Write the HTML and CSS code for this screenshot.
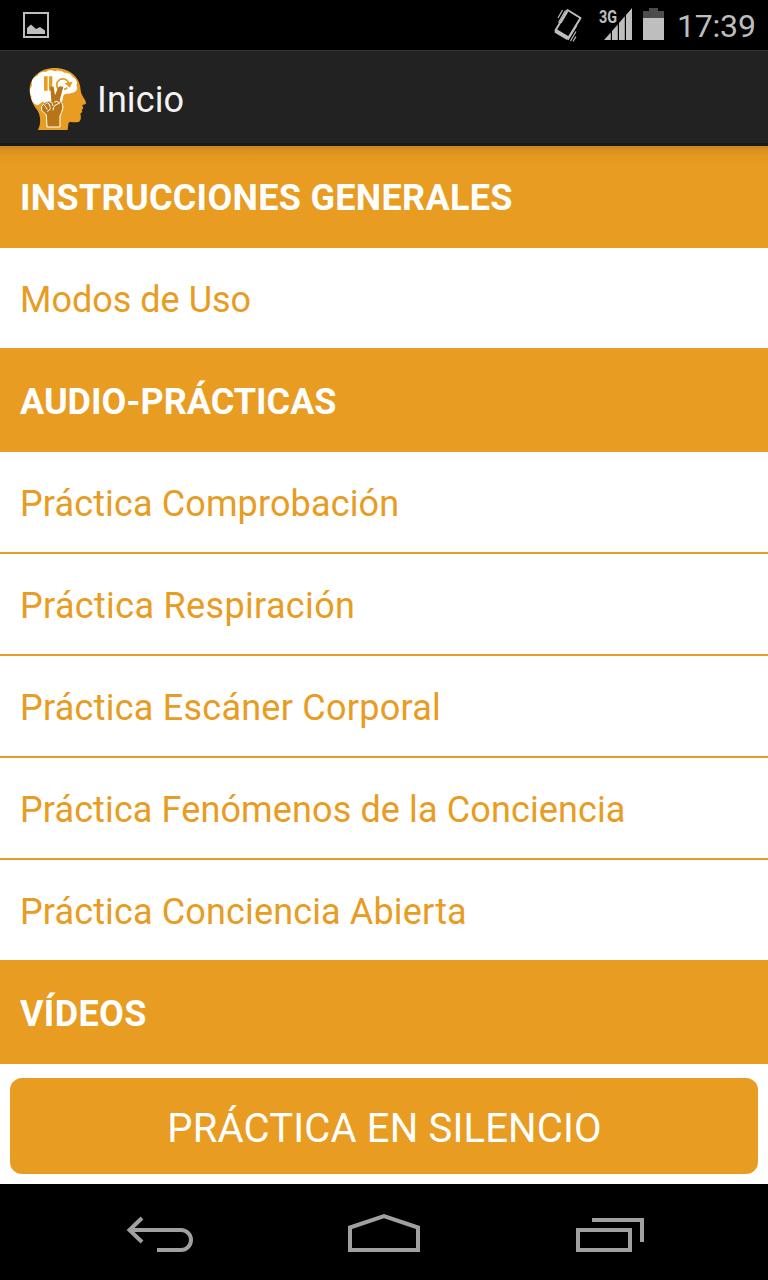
FILE: index.html
```html
<!DOCTYPE html>
<html lang="es">
<head>
<meta charset="utf-8">
<title>Inicio</title>
<link rel="stylesheet" href="styles.css">
</head>
<body>
<div class="screen">
  <div class="status">
    <svg class="status-picture" width="26" height="26" viewBox="0 0 26 26"><path d="M1 1H25V25H1Z" fill="none" stroke="#bebebe" stroke-width="2"/><path d="M4 22V16L8 12.500L13 17L17 15L22 18.500V22Z" fill="#bebebe"/></svg>
    <div class="status-right">
      <svg class="vibrate" width="30" height="36" viewBox="0 0 30 36"><path d="M14.500 3L27.500 11L15 31.500L2.500 23.500Z" fill="none" stroke="#bebebe" stroke-width="2" stroke-linejoin="round"/><path d="M2.500 21.500L16 29.500L14 33L1.500 25.500Z" fill="#bebebe"/><path d="M5 11L9.500 3M5.500 15.500L12.500 3.500M8 16L14.500 5M15 33L23.500 19M17.500 34L23 24.500M20 34.500L23 29.500" stroke="#bebebe" stroke-width="1.200"/></svg>
      <div class="signal"><span class="network">3G</span><svg width="28" height="32" viewBox="0 0 28 32"><path d="M0 32L6.800 24.500V32ZM8 23L13.800 16.500V32H8ZM15 15L20.800 8.300V32H15ZM22 7L28 0V32H22Z" fill="#bebebe"/></svg></div>
      <svg class="battery" width="21" height="32" viewBox="0 0 21 32"><path d="M0 3H6V0H15V3H21V10H0Z" fill="#4c4c4c"/><path d="M0 10H21V32H0Z" fill="#bebebe"/></svg>
      <span class="clock">17:39</span>
    </div>
  </div>
  <header class="appbar">
    <svg class="logo" width="75" height="75" viewBox="0 0 225 225">
      <path d="M54 210C65 187 61 165 51 149C40 137 29 113 29 91C29 51 61 24 104 24C151 24 181 53 182 91C183 107 198 120 198 129C198 134 189 133 187 136L190 145L185 150L187 155L181 161C185 174 182 185 172 187C158 188 145 182 145 193L143 210Z" fill="#e89c22"/>
      <path d="M54 136C40 133 33 121 34 109C27 97 29 83 36 77C32 61 42 49 52 48C56 37 70 33 77 36C86 28 99 31 104 34C113 28 128 33 133 38C145 37 155 44 158 51C168 56 174 67 169 75C176 88 166 100 156 98C146 103 140 98 132 104C127 112 130 121 124 126L94 139L67 125Z" fill="#fff"/>
      <path d="M72 49H83V92H72ZM87 49H97V92H87Z" fill="#e89c22"/>
      <path d="M119 90A18 18 0 1 1 146 72M132 88Q138 87 142 83" fill="none" stroke="#e89c22" stroke-width="5"/>
      <path d="M134 70L158 65L149 83Z" fill="#e89c22"/>
      <path d="M82 200L80 165L66 151L65 138L73 132L78 126L94 123L91 80H101L105 106L114 83Q119 75 130 81L119 121Q129 128 128 144Q124 157 119 168V200Z" fill="#b87517"/>
      <path d="M120 123Q130 130 129 144Q125 157 120 168V201H81L79 165L65 151Q62 137 70 133L75 137L82 149M77 132Q82 124 87 132L91 143M88 126Q95 123 97 131L99 138M82 155L93 145M102 127Q111 120 119 129L105 136Q99 143 99 151" fill="none" stroke="#fff" stroke-width="3"/>
    </svg>
    <h1 class="title">Inicio</h1>
  </header>
  <main class="list">
    <h2 class="section first"><span class="t1">INSTRUCCIONES GENERALES</span></h2>
    <div class="row"><span class="t2">Modos de Uso</span></div>
    <h2 class="section"><span class="t3">AUDIO-PRÁCTICAS</span></h2>
    <div class="row"><span class="t4">Práctica Comprobación</span></div>
    <div class="row"><span class="t5">Práctica Respiración</span></div>
    <div class="row"><span class="t6">Práctica Escáner Corporal</span></div>
    <div class="row"><span class="t7">Práctica Fenómenos de la Conciencia</span></div>
    <div class="row"><span class="t8">Práctica Conciencia Abierta</span></div>
    <h2 class="section"><span class="t9">VÍDEOS</span></h2>
  </main>
  <div class="action"><button class="silence">PRÁCTICA EN SILENCIO</button></div>
  <nav class="navbar">
    <svg width="70" height="40" viewBox="0 0 70 40"><path d="M4.500 14H56A10 10 0 0 1 56 34H32M17 2L4.500 14L17 26" fill="none" stroke="#a0a0a0" stroke-width="4"/></svg>
    <svg width="72" height="40" viewBox="0 0 72 40"><path d="M2 36V13.500L36 2.200L70 13.500V36Z" fill="none" stroke="#a0a0a0" stroke-width="4"/></svg>
    <svg width="68" height="40" viewBox="0 0 68 40"><path d="M2 14H54V34H2ZM16 4H66V26" fill="none" stroke="#a0a0a0" stroke-width="4"/></svg>
  </nav>
</div>
</body>
</html>
```
FILE: styles.css
```css
* { box-sizing: border-box; }
body { margin: 0; background: #000; font-family: Roboto, "Noto Sans", sans-serif; }
h1, h2 { margin: 0; }
svg { display: block; flex: none; }
.screen { width: 768px; height: 1280px; display: flex; flex-direction: column; background: #fff; overflow: hidden; }
.status { height: 50px; background: #000; display: flex; justify-content: space-between; padding: 0 12px 0 23px; color: #bebebe; }
.status-picture { margin-top: 12px; }
.status-right { display: flex; }
.vibrate { margin: 7px 16px 0 0; }
.signal { display: flex; margin-top: 8px; margin-right: 11px; }
.network { font-size: 18px; line-height: 18px; font-weight: 700; width: 18px; margin-right: -13px; transform: scaleX(.8); transform-origin: 0 0; }
.battery { margin: 8px 12px 0 0; }
.clock { width: 80px; padding-left: 1px; font-size: 32px; line-height: 52px; letter-spacing: -.2px; white-space: nowrap; }
.appbar { height: 96px; background: #222; border-top: 1px solid #333; border-bottom: 3px solid #1a1a1a; display: flex; align-items: flex-start; padding: 9px 0 0 20px; }
.title { color: #f3f3f3; font-size: 36px; font-weight: 400; line-height: 80px; margin-left: 2px; letter-spacing: .1px; }
.section, .row { height: 102px; line-height: 105px; padding-left: 20px; font-size: 36px; white-space: nowrap; }
.section { background: #e89c22; color: #fff; font-weight: 700; }
.first { background: linear-gradient(#c7851d 0, #d9911f 4px, #e39820 10px, #e89c22 20px); }
.row { background: #fff; color: #e89c22; font-weight: 400; box-shadow: inset 0 -2px #e89c22; }
.t1 { letter-spacing: .29px; }
.t4 { letter-spacing: .13px; }
.t5 { letter-spacing: .34px; }
.t6 { letter-spacing: .25px; }
.t7 { letter-spacing: .12px; }
.t8 { letter-spacing: .14px; }
.t9 { letter-spacing: .35px; }
.action { height: 120px; padding: 14px 10px 10px; }
.silence { display: block; width: 100%; height: 96px; border: 0; padding: 5px 0 0 1px; border-radius: 12px; background: #e89c22; color: #fff; font: 400 40px Roboto, sans-serif; letter-spacing: .17px; }
.navbar { height: 96px; background: #000; display: flex; justify-content: space-between; padding: 28px 124px 0 125px; }
.navbar svg { margin-top: 4px; }
.navbar svg:nth-child(2) { margin-top: 2px; margin-right: 3px; }
```
